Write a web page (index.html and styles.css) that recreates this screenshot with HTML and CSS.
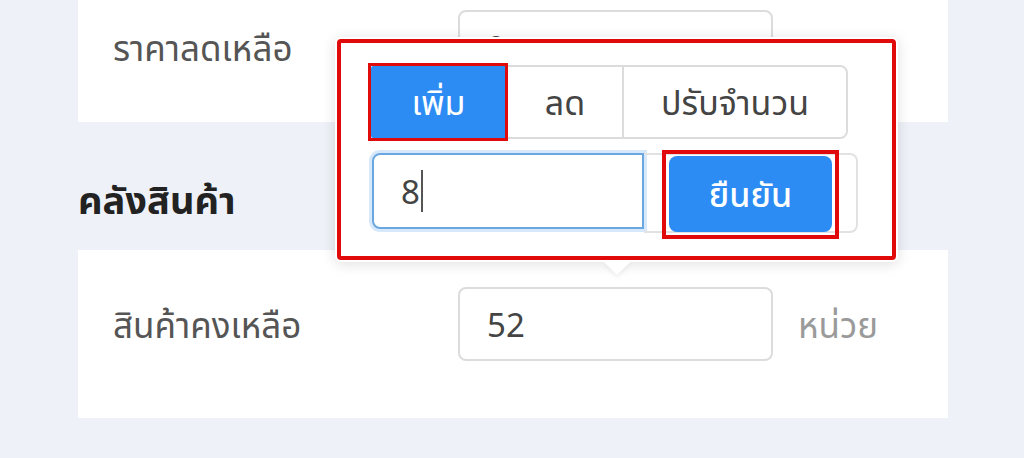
FILE: index.html
```html
<!DOCTYPE html>
<html lang="th">
<head>
<meta charset="utf-8">
<link rel="stylesheet" href="styles.css">
</head>
<body>
<div class="page">
  <section class="card card-top">
    <div class="row">
      <div class="label">ราคาลดเหลือ</div>
      <div class="field">9</div>
    </div>
  </section>

  <h2 class="section-title">คลังสินค้า</h2>

  <section class="card card-stock">
    <div class="row">
      <div class="label">สินค้าคงเหลือ</div>
      <div class="field">52</div>
      <div class="unit">หน่วย</div>
    </div>

    <div class="popover">
      <div class="segment">
        <button class="seg seg-add active">เพิ่ม</button>
        <button class="seg seg-sub">ลด</button>
        <button class="seg seg-set">ปรับจำนวน</button>
      </div>
      <div class="input-group">
        <div class="qty-input">8<span class="caret"></span></div>
        <div class="addon">
          <button class="confirm">ยืนยัน</button>
        </div>
      </div>
    </div>
  </section>
</div>
</body>
</html>
```

FILE: styles.css
```css
* { box-sizing: border-box; }

html, body {
  margin: 0;
  padding: 0;
  background: #eef1f7;
  font-family: "Noto Sans", "Noto Sans Thai", "DejaVu Sans", sans-serif;
  overflow: hidden;
}

.page {
  width: 870px;
  margin-left: 78px;
  height: 458px;
}

.card {
  background: #ffffff;
  padding: 37px 35px;
}

.card-top {
  margin-top: -27px;
  padding-bottom: 38px;
}

.card-stock {
  position: relative;
  padding-bottom: 57px;
}

.row {
  display: flex;
  align-items: center;
  height: 74px;
}

.label {
  width: 345px;
  font-size: 35px;
  color: #555;
  line-height: 1;
}

.field {
  width: 315px;
  height: 74px;
  border: 2px solid #dcdcdc;
  border-radius: 8px;
  display: flex;
  align-items: center;
  padding-left: 27px;
  font-size: 33px;
  color: #444;
}

.unit {
  margin-left: 25px;
  font-size: 35px;
  color: #9a9a9a;
  line-height: 1;
}

.section-title {
  margin: 0;
  height: 128px;
  padding-top: 26px;
  display: flex;
  align-items: center;
  font-size: 38px;
  font-weight: 700;
  color: #222;
  line-height: 1;
}

/* popover */
.popover {
  position: absolute;
  left: 257px;
  top: -213px;
  width: 563px;
  height: 225px;
  background: #fff;
  border-radius: 6px;
  box-shadow: 0 2px 14px rgba(0, 0, 0, 0.13);
  outline: 4px solid #e10a0a;
  outline-offset: -6px;
  padding: 28px 35px 0;
}

.popover::after {
  content: "";
  position: absolute;
  left: 50%;
  bottom: -13px;
  margin-left: -13px;
  border-left: 13px solid transparent;
  border-right: 13px solid transparent;
  border-top: 13px solid #fff;
  filter: drop-shadow(0 3px 2px rgba(0, 0, 0, 0.06));
}

.segment {
  display: flex;
  width: 478px;
  height: 74px;
  border: 2px solid #dcdcdc;
  border-radius: 8px;
}

.seg {
  border: 0;
  background: #fff;
  font-family: inherit;
  font-size: 34px;
  line-height: 1;
  color: #444;
  padding: 0;
}

.seg + .seg { border-left: 2px solid #dcdcdc; }

.seg-add { width: 135px; }
.seg-sub { width: 116px; }
.seg-set { flex: 1; border-radius: 0 7px 7px 0; }

.seg.active {
  position: relative;
  background: #2c8cf4;
  color: #fff;
  margin: -1px 0 -1px -1px;
  border-radius: 2px 0 0 2px;
}

.seg.active::after {
  content: "";
  position: absolute;
  inset: -3px -2px -3px -3px;
  border: 3px solid #e10a0a;
}

.input-group {
  display: flex;
  margin-top: 14px;
  width: 488px;
}

.qty-input {
  width: 272px;
  height: 76px;
  margin-left: 2px;
  border: 2px solid #6aa6df;
  border-radius: 8px 0 0 8px;
  box-shadow: 0 0 0 3px #d7e8fb;
  display: flex;
  align-items: center;
  padding-left: 27px;
  font-size: 33px;
  color: #444;
}

.caret {
  display: inline-block;
  width: 2px;
  height: 42px;
  background: #555;
  margin-left: 1px;
}

.addon {
  flex: 1;
  height: 80px;
  border: 2px solid #e2e2e2;
  border-left: 0;
  border-radius: 0 8px 8px 0;
  padding: 1px 0 0 25px;
}

.confirm {
  position: relative;
  width: 163px;
  height: 76px;
  border: 0;
  border-radius: 8px;
  background: #2c8cf4;
  color: #fff;
  font-family: inherit;
  font-size: 34px;
  line-height: 1;
  font-weight: 500;
}

.confirm::after {
  content: "";
  position: absolute;
  inset: -6px -7px -7px -7px;
  border: 4px solid #e10a0a;
}
```
